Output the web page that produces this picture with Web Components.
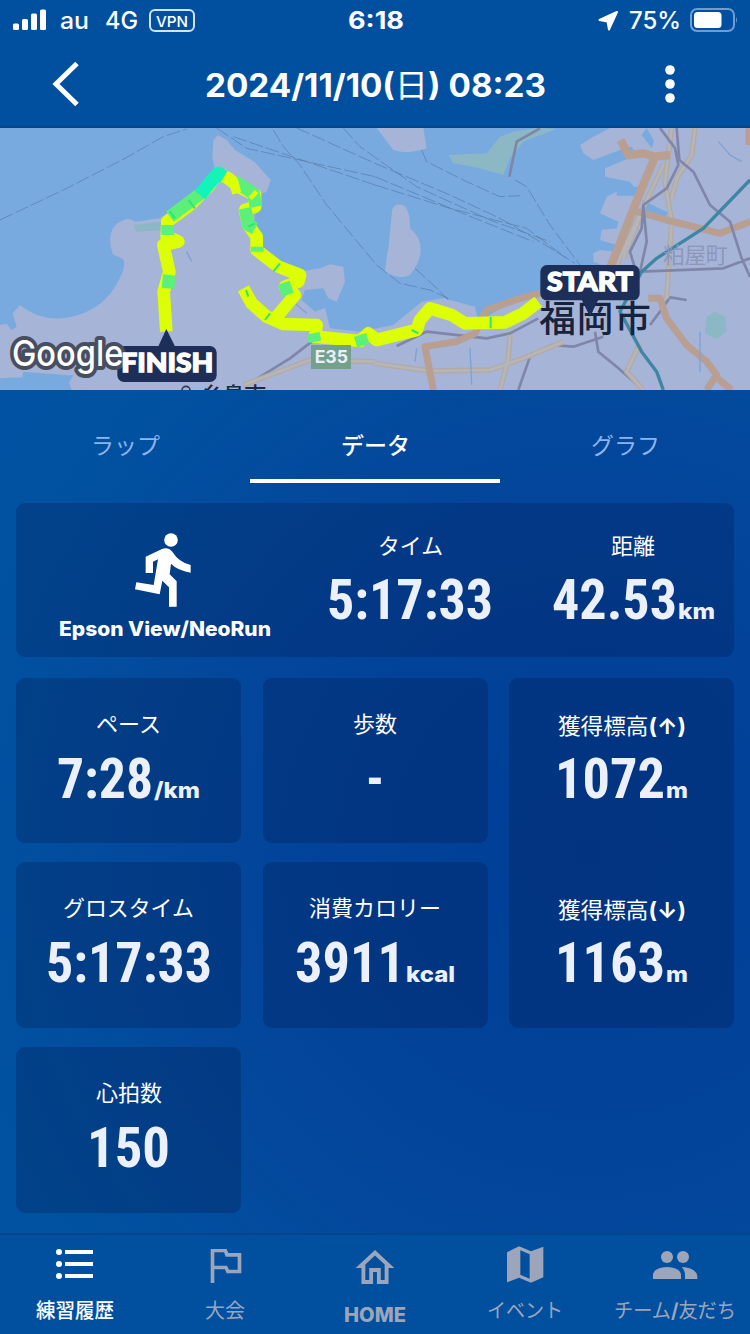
<!DOCTYPE html>
<html lang="ja">
<head>
<meta charset="utf-8">
<title>練習履歴</title>
<style>
  body {
    margin: 0;
    width: 750px;
    height: 1334px;
    overflow: hidden;
    font-family: Inter, "Noto Sans CJK JP", sans-serif;
  }
</style>
</head>
<body>
<run-app></run-app>

<script>
// One line of text set to a fixed width; the bottom of its box is the baseline.
// Latin and Japanese runs can have different weights.
class FitText extends HTMLElement {
  connectedCallback() {
    const shadow = this.attachShadow({ mode: 'open' });
    const size = Number(this.getAttribute('size'));
    const width = Number(this.getAttribute('width'));
    const height = Math.round(size * 0.86);
    const weight = this.getAttribute('weight') || 400;
    const jpWeight = this.getAttribute('jp-weight') || 400;
    const runs = this.textContent.replace(/[\u3000-\u9fff]+/g, (run) => `<tspan font-weight="${jpWeight}">${run}</tspan>`);
    shadow.innerHTML = `
      <style>
        :host { display: block; flex: none; }
        svg { display: block; overflow: visible; fill: currentColor; }
        text { white-space: pre; }
      </style>
      <svg width="${width}" height="${height}">
        <text x="0" y="${height}" font-size="${size}" font-weight="${weight}" textLength="${width}" lengthAdjust="spacingAndGlyphs">${runs}</text>
      </svg>
    `;
  }
}
customElements.define('fit-text', FitText);

class StatusBar extends HTMLElement {
  constructor() {
    super();
    this.attachShadow({ mode: 'open' }).innerHTML = `
      <style>
        :host { display: grid; grid-template-columns: 1fr auto 1fr; height: 40px; box-sizing: border-box; padding: 8px 12px 0 13px; }
        .side { display: flex; align-items: flex-start; }
        .right { justify-content: flex-end; }
        svg { display: block; flex: none; }
        .vpn { box-sizing: border-box; width: 46px; height: 23px; margin: 1px 0 0 11px; padding-top: 3px; border: 2px solid #d4e4f8; border-radius: 6px; display: flex; justify-content: center; }
      </style>
      <div class="side">
        <svg width="34" height="23" fill="#fff">
          <rect x="0" y="15.500" width="6" height="6.500" rx="1.500"/>
          <rect x="9" y="11" width="6" height="11" rx="1.500"/>
          <rect x="18" y="5.500" width="6" height="16.500" rx="1.500"/>
          <rect x="27" y="1.500" width="6" height="20.500" rx="1.500"/>
        </svg>
        <fit-text style="margin-left:13px" size="24" width="29" weight="500">au</fit-text>
        <fit-text style="margin-left:16px" size="24" width="33" weight="500">4G</fit-text>
        <div class="vpn"><fit-text size="15" width="32" weight="500">VPN</fit-text></div>
      </div>
      <fit-text size="24" width="56" weight="700">6:18</fit-text>
      <div class="side right">
        <svg style="margin:2px 10px 0 0" width="21" height="21" viewBox="0 0 21 21"><path d="M1.500 10 19 2 11 19.500 9.500 11.500Z" fill="#fff" stroke="#fff" stroke-width="2" stroke-linejoin="round"/></svg>
        <fit-text style="margin-right:9px" size="24" width="52" weight="500">75%</fit-text>
        <svg width="48" height="24" viewBox="0 0 48 24">
          <rect x="1" y="1" width="43" height="22" rx="6" fill="none" stroke="#6f9dd2" stroke-width="2"/>
          <rect x="4" y="4" width="27.500" height="16" rx="3.500" fill="#fff"/>
          <path d="M46 9q2 3 0 6z" fill="#6f9dd2"/>
        </svg>
      </div>
    `;
  }
}
customElements.define('status-bar', StatusBar);

class TitleBar extends HTMLElement {
  constructor() {
    super();
    this.attachShadow({ mode: 'open' }).innerHTML = `
      <style>
        :host { display: flex; justify-content: space-between; align-items: flex-start; height: 88px; box-sizing: border-box; padding: 20px 73px 0 50px; border-bottom: 2px solid #06458b; }
        svg { display: block; }
        fit-text { margin: 9px -5px 0 0; }
      </style>
      <svg width="32" height="48" viewBox="0 0 32 48"><path d="M27 3.500 6 24 27 44.500" fill="none" stroke="#fff" stroke-width="5"/></svg>
      <fit-text size="32" width="341" weight="700">2024/11/10(日) 08:23</fit-text>
      <svg width="14" height="48" viewBox="0 0 14 48" fill="#fff"><circle cx="7" cy="10" r="4.800"/><circle cx="7" cy="24" r="4.800"/><circle cx="7" cy="38" r="4.800"/></svg>
    `;
  }
}
customElements.define('title-bar', TitleBar);

class RouteMap extends HTMLElement {
  constructor() {
    super();
    this.attachShadow({ mode: 'open' }).innerHTML = `
      <style>
        :host { display: block; height: 262px; }
        svg { display: block; }
        .land { fill: #a6b4d7; }
        .green { fill: #8bb8c4; }
        .water { fill: #78aae0; }
        .line { fill: none; stroke-linejoin: round; stroke-linecap: butt; }
        .ferry { stroke: #5879a3; stroke-width: 2; stroke-dasharray: 42 9; }
        .rail { stroke: #7f86a8; stroke-width: 8; }
        .road { stroke: #b99f91; stroke-width: 21; }
        .casing { stroke: #b5aa9f; stroke-width: 16; }
        .core { stroke: #b5b6bb; stroke-width: 8; }
        .shinkansen { stroke: #3f86a5; stroke-width: 10; }
        .route { stroke: #dcff06; stroke-width: 38; }
        .mid { stroke: #5cf07a; stroke-width: 38; }
        .slow { stroke: #14f3b8; stroke-width: 40; }
      </style>
      <svg width="750" height="262" viewBox="0 9 2250 786">
        <defs>
          <g id="minor">
            <path d="M2015 9 1995 170 2015 290 2000 520M2085 9 2075 90 2030 160 2015 220M1990 120 1900 310 1850 420M1930 250 1870 400"/>
            <path d="M1125 715 1290 738 1470 735 1570 700 1690 650M1530 630 1525 700 1500 795M1920 655 1880 740 1930 795M730 780 930 705 1125 710"/>
          </g>
        </defs>
        <rect class="water" y="9" width="2250" height="786"/>
        <path class="land" d="M0 600 20 596 35 615 50 605 38 565 60 540Q120 590 200 578 300 560 345 485 385 420 368 402L338 388Q320 330 345 302 380 270 405 290L480 280 520 250 600 200 655 180 637 100 640 45 655 30 680 45 705 75 765 112 785 135 812 165 800 200 775 210 770 250 760 300 785 385 850 432 900 440 960 430 990 418 1030 425 1035 470 1010 530 985 520 970 490 915 495 905 525 945 560 975 548 990 610 1080 620 1180 600 1265 530 1330 520 1425 545 1435 590 1560 515 1640 500 1700 440 1830 430 1780 410 1780 385 1800 375 1845 380 1850 360 1800 345 1805 315 1850 310 1855 290 1800 265 1820 215 1850 200 1900 212 1905 190 1890 170 1815 155 1815 130 1910 90 1895 65 1860 75 1780 105 1750 85 1740 60 1780 35 1830 9H2250V795H195L220 750 0 760Z"/>
        <path class="water" d="M70 740 200 750 215 795H60ZM1940 9 1962 48 1955 70 1925 30ZM1927 225 2005 263 1995 280 1930 260ZM1850 185H1915V212H1850Z"/>
        <path class="land" d="M1130 9H1270L1280 70Q1220 90 1180 75ZM1176 260Q1180 232 1208 240 1230 250 1230 310 1262 335 1262 375 1262 410 1230 450 1200 465 1155 440 1157 410 1165 370 1176 320ZM1355 120 1400 145 1500 140 1550 185 1530 198 1500 190 1470 155 1385 150Z"/>
        <path class="green" d="M1345 90 1460 85 1500 35 1540 20 1610 9 1670 12 1570 50 1530 100 1510 150 1440 130 1360 115ZM400 300 480 290 500 315 410 320ZM2120 575 2145 560 2175 575 2180 620 2150 642 2115 625Z"/>

        <g class="line ferry">
          <path d="M0 285 200 190 375 100 490 35 560 12"/>
          <path d="M650 9 740 70 1125 155M820 15 850 65 900 120 980 240 1080 360 1130 420 1200 475 1290 495 1345 520"/>
          <path d="M890 9 1125 115 1350 210 1500 280 1620 350 1725 415M1030 9 1080 65 1250 185 1470 285 1650 350M1125 180 1350 250 1580 310 1700 400M1125 155 1400 270 1600 350M700 35 1125 180"/>
          <path d="M1265 75 1280 110 1400 170 1500 215 1560 212M1545 165 1580 185 1650 300 1740 420M1245 430 1300 480 1345 525"/>
        </g>
        <g class="line rail">
          <path d="M1528 155 1550 50 1620 10"/>
          <path d="M1190 663 1280 620 1460 640 1530 625 1615 580M1555 795 1590 695 1655 660 1720 665 1810 635M1785 620 1795 680 1850 725 1930 795M1950 600 1980 560 2010 517 2060 525M740 780 870 700 935 650"/>
        </g>
        <use class="line casing" href="#minor"/>
        <use class="line core" href="#minor"/>
        <g class="line road">
          <path d="M1862 45 1885 90 1930 85 1965 95 2010 90M1965 95 1905 240 1830 430" stroke-width="25"/>
          <path d="M1895 255 2000 285 2160 325 2250 290M1620 505 1560 520 1460 555 1425 625 1370 650 1275 665 1300 795M1945 520 1980 520 2000 580 2060 660 2120 710 2150 750 2120 795M2140 750 2195 795M2247 10V60"/>
        </g>
        <path class="line rail" d="M1980 9 2025 70 2035 120 2000 190 1930 240 1925 310 1890 380 1905 430M2030 9 2038 105 2080 140 2130 240 2190 290 2225 400 2250 455M1930 240 1940 350 1920 440 2170 430 2250 400"/>
        <path class="line shinkansen" d="M2250 165 2110 310 1970 400 1925 440 1860 560 1925 680 1970 740 1990 795"/>
        <path class="line" d="M2155 50 2190 90 2225 110M1250 670 1245 710M1410 670 1415 780M560 380 575 410M880 530 920 565M2100 620 2100 740" stroke="#7da3d4" stroke-width="4"/>

        <path class="line route" d="M499 620 491 500 508 440 490 360 535 350 500 335 502 290 570 240 620 190 655 145 685 160 715 185 765 210 765 245 735 255 745 300 770 335 770 375 835 425 900 450 895 470 855 485 885 510 830 575"/>
        <path class="line route" d="M730 490 755 535 800 575 850 597 950 600 945 635 1080 648 1105 625 1130 645 1250 615 1260 585 1290 550 1355 570 1395 595 1515 592 1570 565 1615 530"/>
        <path class="line mid" d="M504 490 508 450M503 330 503 300M510 275 610 200M705 170 760 205 768 245M735 250 745 300 765 310M772 365V380M840 497 875 485M940 625 945 650M1080 630 1090 662"/>
        <path class="line slow" d="M600 210 632 170 655 145 672 155"/>
        <path class="line" d="M700 165 710 205M755 205 765 215M770 325 773 350" stroke="#dcff06" stroke-width="28"/>
        <path class="line" d="M508 258 525 280M565 225 585 250M745 305 765 295M820 440 840 415M795 585 810 565M1235 615 1255 625M1472 575V610M738 495 745 515" stroke="#2be777" stroke-width="6"/>

        <text x="1990" y="413" font-size="65" textLength="192" fill="#8b97bb">粕屋町</text>
        <rect x="933" y="660" width="120" height="72" fill="#75a08d"/>
        <text x="944" y="715" font-size="52" font-weight="700" textLength="100" lengthAdjust="spacingAndGlyphs" fill="#e9effa">E35</text>
        <text x="1618" y="622" font-size="110" font-weight="500" textLength="335" fill="#16233c">福岡市</text>
        <circle cx="558" cy="796" r="12" fill="none" stroke="#303b58" stroke-width="5"/>
        <text x="605" y="833" font-size="66" font-weight="500" textLength="194" fill="#1b2947">糸島市</text>

        <path d="M499 612 526 666H474ZM1745 524H1795L1770 575Z" fill="#1d2f58"/>
        <rect x="352" y="663" width="298" height="108" rx="20" fill="#1d2f58"/>
        <rect x="1621" y="420" width="298" height="106" rx="20" fill="#1d2f58"/>
        <text x="36" y="723" font-size="106" font-weight="500" textLength="334" lengthAdjust="spacingAndGlyphs" fill="#fff" stroke="#474e60" stroke-width="24" stroke-linejoin="round" paint-order="stroke">Google</text>
        <g font-family="Lato, sans-serif" font-weight="900" fill="#fff" stroke="#fff" stroke-width="4">
          <text x="364" y="740" font-size="80" textLength="276" lengthAdjust="spacingAndGlyphs">FINISH</text>
          <text x="1641" y="499" font-size="78" textLength="258" lengthAdjust="spacingAndGlyphs">START</text>
        </g>
      </svg>
    `;
  }
}
customElements.define('route-map', RouteMap);

class TabRow extends HTMLElement {
  constructor() {
    super();
    this.attachShadow({ mode: 'open' }).innerHTML = `
      <style>
        :host { display: grid; grid-template-columns: repeat(3, 250px); height: 93px; color: #8db4ee; }
        div { box-sizing: border-box; display: flex; justify-content: center; padding-top: 44px; border-bottom: 4px solid transparent; }
        .active { color: #fff; border-color: #fff; }
      </style>
      <div><fit-text size="23" width="69">ラップ</fit-text></div>
      <div class="active"><fit-text size="23" width="69" jp-weight="500">データ</fit-text></div>
      <div><fit-text size="23" width="69">グラフ</fit-text></div>
    `;
  }
}
customElements.define('tab-row', TabRow);

// Label over a big condensed number with an optional small unit.
class StatValue extends HTMLElement {
  connectedCallback() {
    const attr = (name) => this.getAttribute(name) || '';
    const unit = attr('unit')
      ? `<fit-text class="unit" size="22" width="${attr('unit-width')}" weight="800">${attr('unit')}</fit-text>`
      : '';
    this.attachShadow({ mode: 'open' }).innerHTML = `
      <style>
        :host { display: flex; flex-direction: column; align-items: center; gap: 19px; color: #fff; }
        .value { display: flex; align-items: flex-end; color: #ecf0fa; }
        .number { font-family: "Roboto Condensed", Roboto, sans-serif; font-stretch: 75%; }
        .unit { margin-left: 1px; }
      </style>
      <fit-text size="22" width="${attr('label-width')}" weight="700">${attr('label')}</fit-text>
      <div class="value">
        <fit-text class="number" size="55" width="${attr('value-width')}" weight="700">${attr('value')}</fit-text>
        ${unit}
      </div>
    `;
  }
}
customElements.define('stat-value', StatValue);

class StatCard extends HTMLElement {
  constructor() {
    super();
    this.attachShadow({ mode: 'open' }).innerHTML = `
      <style>
        :host { display: flex; flex-direction: column; align-items: center; box-sizing: border-box; padding-top: 35px; border-radius: 9px; background: rgba(5, 15, 60, .24); }
      </style>
      <slot></slot>
    `;
  }
}
customElements.define('stat-card', StatCard);

class NavItem extends HTMLElement {
  constructor() {
    super();
    this.attachShadow({ mode: 'open' }).innerHTML = `
      <style>
        :host { display: flex; flex-direction: column; align-items: center; padding-top: 8px; gap: 14px; color: #9ca5ba; }
        :host([active]) { color: #fff; }
      </style>
      <slot name="icon"></slot>
      <slot></slot>
    `;
  }
}
customElements.define('nav-item', NavItem);

class RunApp extends HTMLElement {
  constructor() {
    super();
    const shadow = this.attachShadow({ mode: 'open' });

    const template = document.createElement('template');
    template.innerHTML = `
      <style>
        :host {
          display: flex;
          flex-direction: column;
          height: 1334px;
          color: #fff;
          background: radial-gradient(circle at 590px 850px, #003f97 0, #024299 240px, #03489c 430px, #0151a1 620px, #0154a5 100%);
        }
        header { background: #01509f; }
        main { flex: 1; padding: 20px 16px 0; }
        .summary { display: grid; grid-template-columns: 298px 192px 1fr; align-items: start; height: 154px; padding-top: 30px; background: rgba(5, 15, 60, .22); }
        .device { display: flex; flex-direction: column; align-items: center; gap: 12px; }
        .device svg { display: block; margin-right: 5px; }
        .summary stat-value { padding-top: 2px; gap: 18px; }
        .summary stat-value:last-child { padding-left: 26px; }
        .cards { display: grid; grid-template-columns: 225px 225px 225px; grid-template-rows: 165px 166px 166px; justify-content: space-between; row-gap: 19px; margin-top: 21px; }
        .tall { grid-column: 3; grid-row: 1 / span 2; padding-top: 37px; gap: 101px; }
        .tall stat-value { gap: 17px; }
        nav { display: grid; grid-template-columns: repeat(5, 150px); height: 101px; box-sizing: border-box; border-top: 2px solid #06458c; background: #01509f; }
        nav svg { display: block; fill: currentColor; }
      </style>
      <header>
        <status-bar></status-bar>
        <title-bar></title-bar>
      </header>
      <route-map></route-map>
      <tab-row></tab-row>
      <main>
        <stat-card class="summary">
          <div class="device">
            <svg width="56" height="74" viewBox="73 38 168 222" fill="#fff">
              <circle cx="181" cy="59" r="20.500"/>
              <path d="M105 158V109L154 86Q172 79 185 94 205 126 240 134V157Q200 150 181 130L177 162 198 183V259H175V201L155 181 147 222 73 207 77 186 129 194 142 117 127 124V158Z"/>
            </svg>
            <fit-text size="20" width="212" weight="800">Epson View/NeoRun</fit-text>
          </div>
          <stat-value label="タイム" label-width="65" value="5:17:33" value-width="166"></stat-value>
          <stat-value label="距離" label-width="44" value="42.53" value-width="125" unit="km" unit-width="37"></stat-value>
        </stat-card>
        <div class="cards">
          <stat-card><stat-value label="ペース" label-width="65" value="7:28" value-width="96" unit="/km" unit-width="46"></stat-value></stat-card>
          <stat-card><stat-value label="歩数" label-width="44" value="-" value-width="18"></stat-value></stat-card>
          <stat-card class="tall">
            <stat-value label="獲得標高(↑)" label-width="128" value="1072" value-width="110" unit="m" unit-width="22"></stat-value>
            <stat-value label="獲得標高(↓)" label-width="128" value="1163" value-width="110" unit="m" unit-width="22"></stat-value>
          </stat-card>
          <stat-card><stat-value label="グロスタイム" label-width="131" value="5:17:33" value-width="166"></stat-value></stat-card>
          <stat-card><stat-value label="消費カロリー" label-width="132" value="3911" value-width="110" unit="kcal" unit-width="49"></stat-value></stat-card>
          <stat-card><stat-value label="心拍数" label-width="66" value="150" value-width="83"></stat-value></stat-card>
        </div>
      </main>
      <nav>
        <nav-item active>
          <svg slot="icon" width="48" height="44" viewBox="153 39 144 132">
            <path d="M195 60h84v12h-84zM195 96h84v12h-84zM195 132h84v12h-84z"/>
            <circle cx="177" cy="66" r="9"/><circle cx="177" cy="102" r="9"/><circle cx="177" cy="138" r="9"/>
          </svg>
          <fit-text size="20" width="78" jp-weight="500">練習履歴</fit-text>
        </nav-item>
        <nav-item>
          <svg slot="icon" width="48" height="44" viewBox="603 39 144 132"><path fill-rule="evenodd" d="M632 57H680L685 69H724V130H680L675 118H643V159H632ZM643 67V107H681L687 119H713V80H677L672 67Z"/></svg>
          <fit-text size="20" width="40">大会</fit-text>
        </nav-item>
        <nav-item>
          <svg slot="icon" width="48" height="44" viewBox="1053 39 144 132"><path transform="translate(1055.400 42) scale(5.800 6)" d="M12 5.690l5 4.500V18h-2v-6H9v6H7v-7.810l5-4.500M12 3L2 12h3v8h6v-6h2v6h6v-8h3L12 3z"/></svg>
          <fit-text style="margin-top:4px" size="20" width="62" weight="800">HOME</fit-text>
        </nav-item>
        <nav-item>
          <svg slot="icon" width="48" height="44" viewBox="378 39 144 132"><path fill-rule="evenodd" d="M396 67 432 49 468 64 505 50V142L468 158 432 143 396 157ZM436 61V134L464 146V73Z"/></svg>
          <fit-text size="20" width="76">イベント</fit-text>
        </nav-item>
        <nav-item>
          <svg slot="icon" width="48" height="44" viewBox="828 39 144 132">
            <circle cx="876" cy="81" r="18"/><circle cx="924" cy="81" r="18"/>
            <path d="M834 147V133Q838 112 876 111 914 112 918 133V147ZM920 111Q962 113 967 138V147H930V133Q929 119 920 111Z"/>
          </svg>
          <fit-text size="20" width="122" weight="700">チーム/友だち</fit-text>
        </nav-item>
      </nav>
    `;

    shadow.appendChild(template.content.cloneNode(true));
  }
}
customElements.define('run-app', RunApp);
</script>
</body>
</html>
